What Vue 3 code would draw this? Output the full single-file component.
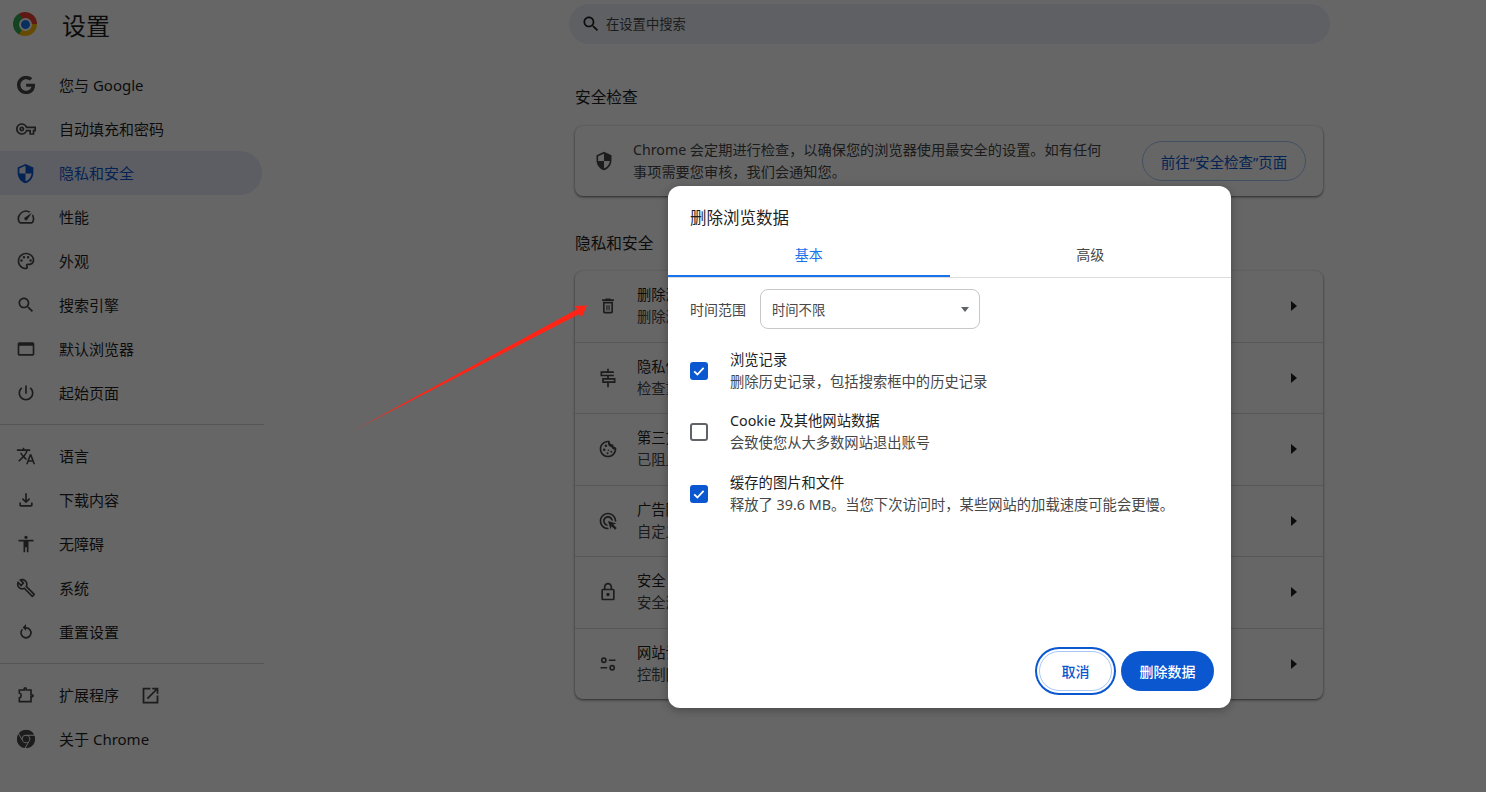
<script setup>
const icons = {
  google: 'M12.24 10.285V14.4h6.806c-.275 1.765-2.056 5.174-6.806 5.174-4.095 0-7.439-3.389-7.439-7.574s3.345-7.574 7.439-7.574c2.33 0 3.891.989 4.785 1.849l3.254-3.138C18.189 1.186 15.479 0 12.24 0c-6.635 0-12 5.365-12 12s5.365 12 12 12c6.926 0 11.52-4.869 11.52-11.726 0-.788-.085-1.39-.189-1.989H12.24z',
  key: 'M22 19h-6v-4h-2.68c-1.14 2.42-3.6 4-6.32 4-3.86 0-7-3.14-7-7s3.14-7 7-7c2.72 0 5.17 1.58 6.32 4H24v6h-2v4zm-4-2h2v-4h2v-2H11.94l-.23-.67C11.01 8.34 9.11 7 7 7c-2.76 0-5 2.24-5 5s2.24 5 5 5c2.11 0 4.01-1.34 4.71-3.33l.23-.67H18v4zM7 15c-1.65 0-3-1.35-3-3s1.35-3 3-3 3 1.35 3 3-1.35 3-3 3zm0-4c-.55 0-1 .45-1 1s.45 1 1 1 1-.45 1-1-.45-1-1-1z',
  shield: 'M12 1L3 5v6c0 5.55 3.84 10.74 9 12 5.16-1.26 9-6.45 9-12V5l-9-4zm0 10.99h7c-.53 4.12-3.28 7.79-7 8.94V12H5V6.3l7-3.11v8.8z',
  speed: 'M20.38 8.57l-1.23 1.85a8 8 0 0 1-.22 7.58H5.07A8 8 0 0 1 15.58 6.85l1.85-1.23A10 10 0 0 0 3.35 19a2 2 0 0 0 1.72 1h13.85a2 2 0 0 0 1.74-1 10 10 0 0 0-.27-10.44zm-9.79 6.84a2 2 0 0 0 2.83 0l5.66-8.49-8.49 5.66a2 2 0 0 0 0 2.83z',
  palette: 'M12 22C6.49 22 2 17.51 2 12S6.49 2 12 2s10 4.04 10 9c0 3.31-2.69 6-6 6h-1.77c-.28 0-.5.22-.5.5 0 .12.05.23.13.33.41.47.64 1.06.64 1.67 0 1.38-1.12 2.5-2.5 2.5zm0-18c-4.41 0-8 3.59-8 8s3.59 8 8 8c.28 0 .5-.22.5-.5 0-.16-.08-.28-.14-.35-.41-.46-.63-1.05-.63-1.65 0-1.38 1.12-2.5 2.5-2.5H16c2.21 0 4-1.79 4-4 0-3.86-3.59-7-8-7zM6.5 10a1.5 1.5 0 1 0 0 3 1.5 1.5 0 0 0 0-3zm3-4a1.5 1.5 0 1 0 0 3 1.5 1.5 0 0 0 0-3zm5 0a1.5 1.5 0 1 0 0 3 1.5 1.5 0 0 0 0-3zm3 4a1.5 1.5 0 1 0 0 3 1.5 1.5 0 0 0 0-3z',
  search: 'M15.5 14h-.79l-.28-.27C15.41 12.59 16 11.11 16 9.5 16 5.91 13.09 3 9.5 3S3 5.91 3 9.5 5.91 16 9.5 16c1.61 0 3.09-.59 4.23-1.57l.27.28v.79l5 4.99L20.49 19l-4.99-5zm-6 0C7.01 14 5 11.99 5 9.5S7.01 5 9.5 5 14 7.01 14 9.5 11.99 14 9.5 14z',
  browser: 'M20 4H4c-1.1 0-2 .9-2 2v12c0 1.1.9 2 2 2h16c1.1 0 2-.9 2-2V6c0-1.1-.9-2-2-2zm0 14H4V8h16v10z',
  power: 'M13 3h-2v10h2V3zm4.83 2.17l-1.42 1.42C17.99 7.86 19 9.81 19 12c0 3.87-3.13 7-7 7s-7-3.13-7-7c0-2.19 1.01-4.14 2.58-5.42L6.17 5.17C4.23 6.82 3 9.26 3 12c0 4.97 4.03 9 9 9s9-4.03 9-9c0-2.74-1.23-5.18-3.17-6.83z',
  translate: 'M12.87 15.07l-2.54-2.51.03-.03c1.74-1.94 2.98-4.17 3.71-6.53H17V4h-7V2H8v2H1v1.99h11.17C11.5 7.92 10.44 9.75 9 11.35 8.07 10.32 7.3 9.19 6.69 8h-2c.73 1.63 1.73 3.17 2.98 4.56l-5.09 5.02L4 19l5-5 3.11 3.11.76-2.04zM18.5 10h-2L12 22h2l1.12-3h4.75L21 22h2l-4.5-12zm-2.62 7l1.62-4.33L19.12 17h-3.24z',
  download: 'M18 15v3H6v-3H4v3c0 1.1.9 2 2 2h12c1.1 0 2-.9 2-2v-3h-2zm-1-4l-1.41-1.41L13 12.17V4h-2v8.17L8.41 9.59 7 11l5 5 5-5z',
  person: 'M12 2c1.1 0 2 .9 2 2s-.9 2-2 2-2-.9-2-2 .9-2 2-2zm9 7h-6v13h-2v-6h-2v6H9V9H3V7h18v2z',
  wrench: 'M22.61 18.99l-9.08-9.08c.93-2.34.45-5.1-1.44-7C9.79.61 6.21.4 3.66 2.26L7.5 6.11 6.08 7.52 2.25 3.69C.39 6.23.6 9.82 2.9 12.11c1.86 1.86 4.57 2.35 6.89 1.48l9.11 9.11c.39.39 1.02.39 1.41 0l2.3-2.3c.4-.38.4-1.01 0-1.41zm-3 1.6l-9.46-9.46c-.61.45-1.29.72-2 .82-1.36.2-2.79-.21-3.83-1.25C3.37 9.76 2.93 8.5 3 7.26l3.09 3.09 4.24-4.24-3.09-3.09c1.24-.07 2.49.37 3.44 1.31 1.08 1.08 1.49 2.57 1.24 3.96-.12.71-.42 1.37-.88 1.96l9.45 9.45-.88.89z',
  reset: 'M12 6V2.5L8 6.5l4 4V8c2.76 0 5 2.24 5 5s-2.24 5-5 5-5-2.24-5-5c0-1.4.6-2.7 1.5-3.6L7.1 8A7 7 0 1 0 12 6z',
  puzzle: 'M11 3.5c.7 0 1.2.5 1.2 1.2V6H18v5.8h1.3a1.2 1.2 0 0 1 0 2.4H18V20H4v-4.6c1.3-.3 2.2-1.5 2.2-2.9S5.3 9.9 4 9.6V6h5.8V4.7c0-.7.5-1.2 1.2-1.2z',
  chrome: 'M12 0C8.21 0 4.831 1.757 2.632 4.501l3.953 6.848A5.454 5.454 0 0 1 12 6.545h10.691A12 12 0 0 0 12 0zM1.931 5.47A11.943 11.943 0 0 0 0 12c0 6.012 4.42 10.991 10.189 11.864l3.953-6.847a5.45 5.45 0 0 1-6.865-2.29zm13.342 2.166a5.446 5.446 0 0 1 1.45 7.09l.002.001h-.002l-5.344 9.257c.206.01.413.016.621.016 6.627 0 12-5.373 12-12 0-1.54-.29-3.011-.818-4.364zM12 16.364a4.364 4.364 0 1 1 0-8.728 4.364 4.364 0 0 1 0 8.728Z',
  external: 'M19 19H5V5h7V3H3v18h18v-9h-2v7zM14 3v2h3.59l-9.83 9.83 1.41 1.41L19 6.41V10h2V3h-7z',
  trash: 'M6 19c0 1.1.9 2 2 2h8c1.1 0 2-.9 2-2V7H6v12zM8 9h8v10H8V9zm7.5-5l-1-1h-5l-1 1H5v2h14V4h-3.5zM10 11h1.4v6H10zm2.6 0H14v6h-1.4z',
  guide: 'M11 1h2v3h6v6h-6v2h8v6h-8v5h-2v-5H5v-6h6v-2H3V4h8V1zM5 6v2h14V6H5zm2 8v2h12v-2H7z',
  cookie: 'M12 22C6.49 22 2 17.51 2 12 2 6.2 6.9 1.5 13 2.1c.1 0 .9.1 1.1.2-.5 2.6 1.6 4.8 4.1 4.1-.3 2.2 1.3 3.9 3.6 3.7.1.6.2 1.3.2 1.9 0 5.51-4.49 10-10 10zm0-18c-4.41 0-8 3.59-8 8s3.59 8 8 8c4.1 0 7.5-3.1 7.9-7.1-1.9-.3-3.3-1.5-3.8-3.3-2.2-.1-3.9-1.7-4.1-3.9v-.1zM9.5 6.5a1.5 1.5 0 1 1 0 3 1.5 1.5 0 0 1 0-3zm-2 5a1.5 1.5 0 1 1 0 3 1.5 1.5 0 0 1 0-3zm5 1a1 1 0 1 1 0 2 1 1 0 0 1 0-2zm-1 3.5a1.2 1.2 0 1 1 0 2.4 1.2 1.2 0 0 1 0-2.4zm4.5-2a1.2 1.2 0 1 1 0 2.4 1.2 1.2 0 0 1 0-2.4z',
  ads: 'M11.71 17.99A5.993 5.993 0 0 1 6 12c0-3.31 2.69-6 6-6 3.22 0 5.84 2.53 5.99 5.71l-2.1-.63A3.999 3.999 0 0 0 12 8c-2.21 0-4 1.79-4 4 0 1.89 1.31 3.47 3.08 3.89l.63 2.1zM22 12c0 .3-.01.6-.04.9l-1.97-.59c.01-.1.01-.21.01-.31 0-4.42-3.58-8-8-8s-8 3.58-8 8 3.58 8 8 8c.1 0 .21 0 .31-.01l.59 1.97c-.3.03-.6.04-.9.04-5.52 0-10-4.48-10-10S6.48 2 12 2s10 4.48 10 10zm-3.77 4.26L22 15l-10-3 3 10 1.26-3.77 4.27 4.27 1.98-1.98-4.28-4.26z',
  lock: 'M18 8h-1V6c0-2.76-2.24-5-5-5S7 3.24 7 6v2H6c-1.1 0-2 .9-2 2v10c0 1.1.9 2 2 2h12c1.1 0 2-.9 2-2V10c0-1.1-.9-2-2-2zM9 6c0-1.66 1.34-3 3-3s3 1.34 3 3v2H9V6zm9 14H6V10h12v10zm-6-3c1.1 0 2-.9 2-2s-.9-2-2-2-2 .9-2 2 .9 2 2 2z',
  tune: 'M7 4a3.5 3.5 0 1 1 0 7 3.5 3.5 0 0 1 0-7zm0 2a1.5 1.5 0 1 0 0 3 1.5 1.5 0 0 0 0-3zm6 .5h8v2h-8zM17 13a3.5 3.5 0 1 1 0 7 3.5 3.5 0 0 1 0-7zm0 2a1.5 1.5 0 1 0 0 3 1.5 1.5 0 0 0 0-3zM3 15.5h8v2H3z'
}

const navGroups = [
  [
    { icon: 'google', label: '您与 Google' },
    { icon: 'key', label: '自动填充和密码' },
    { icon: 'shield', label: '隐私和安全', active: true },
    { icon: 'speed', label: '性能' },
    { icon: 'palette', label: '外观' },
    { icon: 'search', label: '搜索引擎' },
    { icon: 'browser', label: '默认浏览器' },
    { icon: 'power', label: '起始页面' }
  ],
  [
    { icon: 'translate', label: '语言' },
    { icon: 'download', label: '下载内容' },
    { icon: 'person', label: '无障碍' },
    { icon: 'wrench', label: '系统' },
    { icon: 'reset', label: '重置设置' }
  ],
  [
    { icon: 'puzzle', label: '扩展程序', external: true },
    { icon: 'chrome', label: '关于 Chrome' }
  ]
]

const rows = [
  { icon: 'trash', title: '删除浏览数据', sub: '删除浏览记录、Cookie、缓存及其他数据' },
  { icon: 'guide', title: '隐私保护指南', sub: '检查重要的隐私和安全控制设置' },
  { icon: 'cookie', title: '第三方 Cookie', sub: '已阻止无痕模式下的第三方 Cookie' },
  { icon: 'ads', title: '广告隐私设置', sub: '自定义用于广告的信息' },
  { icon: 'lock', title: '安全', sub: '安全浏览（防范危险网站）和其他安全设置' },
  { icon: 'tune', title: '网站设置', sub: '控制网站可以使用和显示什么信息' }
]

const options = [
  { title: '浏览记录', sub: '删除历史记录，包括搜索框中的历史记录', checked: true },
  { title: 'Cookie 及其他网站数据', sub: '会致使您从大多数网站退出账号', checked: false },
  { title: '缓存的图片和文件', sub: '释放了 39.6 MB。当您下次访问时，某些网站的加载速度可能会更慢。', checked: true }
]
</script>

<template>
  <div class="page">
    <header class="top">
      <div class="brand">
        <span class="logo"><span class="logo-core"></span></span>
        <span class="brand-title">设置</span>
      </div>
      <div class="search">
        <svg class="search-icon" viewBox="0 0 24 24"><path :d="icons.search" /></svg>
        <span class="search-text">在设置中搜索</span>
      </div>
    </header>

    <div class="body">
      <nav class="side">
        <div v-for="(group, g) in navGroups" :key="g" class="side-group">
          <div v-for="item in group" :key="item.label" class="side-item" :class="{ active: item.active }">
            <svg class="side-icon" :class="'ic-' + item.icon" viewBox="0 0 24 24"><path :d="icons[item.icon]" /></svg>
            <span class="side-label">{{ item.label }}</span>
            <svg v-if="item.external" class="ext-icon" viewBox="0 0 24 24"><path :d="icons.external" /></svg>
          </div>
        </div>
      </nav>

      <main class="main">
        <h2 class="section-title first">安全检查</h2>
        <section class="card safety">
          <svg class="row-icon" viewBox="0 0 24 24"><path :d="icons.shield" /></svg>
          <p class="safety-text">Chrome 会定期进行检查，以确保您的浏览器使用最安全的设置。如有任何事项需要您审核，我们会通知您。</p>
          <button class="safety-btn">前往“安全检查”页面</button>
        </section>

        <h2 class="section-title second">隐私和安全</h2>
        <section class="card list">
          <div v-for="row in rows" :key="row.title" class="row">
            <svg class="row-icon" viewBox="0 0 24 24"><path :d="icons[row.icon]" /></svg>
            <div class="row-text">
              <div class="row-title">{{ row.title }}</div>
              <div class="row-sub">{{ row.sub }}</div>
            </div>
            <span class="row-arrow"></span>
          </div>
        </section>
      </main>
    </div>

    <div class="scrim"></div>

    <!-- 标注箭头 -->
    <svg class="annotation" viewBox="0 0 1486 792">
      <defs>
        <linearGradient id="arrowFade" x1="350" y1="432" x2="400" y2="405" gradientUnits="userSpaceOnUse">
          <stop offset="0" stop-color="#ff2416" stop-opacity="0.6" />
          <stop offset="1" stop-color="#ff2416" />
        </linearGradient>
      </defs>
      <polygon fill="url(#arrowFade)" points="350,432.5 577.3,309 574.3,306 587,305.5 581.7,317.3 579.3,314" />
    </svg>

    <div class="dialog">
      <h3 class="dialog-title">删除浏览数据</h3>
      <div class="tabs">
        <div class="tab selected">基本</div>
        <div class="tab">高级</div>
      </div>

      <div class="range">
        <span class="range-label">时间范围</span>
        <div class="select">
          <span>时间不限</span>
          <span class="select-caret"></span>
        </div>
      </div>

      <div class="options">
        <div v-for="opt in options" :key="opt.title" class="option">
          <span class="check" :class="{ on: opt.checked }">
            <svg v-if="opt.checked" viewBox="0 0 18 18"><path d="M4.2 9.4l3.2 3.1 6.2-6.6" fill="none" stroke="#fff" stroke-width="1.8" /></svg>
          </span>
          <div>
            <div class="option-title">{{ opt.title }}</div>
            <div class="option-sub">{{ opt.sub }}</div>
          </div>
        </div>
      </div>

      <div class="footer">
        <button class="btn cancel">取消</button>
        <button class="btn confirm">删除数据</button>
      </div>
    </div>
  </div>
</template>

<style>
body {
  margin: 0;
  background: #fff;
}
</style>

<style scoped>
.page {
  position: relative;
  width: 1486px;
  height: 792px;
  overflow: hidden;
  background: #fff;
  color: #1f1f1f;
  font-family: "Noto Sans", "Noto Sans CJK SC", sans-serif;
}

.top {
  display: flex;
  height: 63px;
}

.brand {
  width: 569px;
  display: flex;
  align-items: center;
  box-sizing: border-box;
  height: 48px;
  padding-left: 13px;
  gap: 25px;
}

.logo {
  width: 24px;
  height: 24px;
  border-radius: 50%;
  background: conic-gradient(#ea4335 0deg 90deg, #fbbc04 90deg 210deg, #34a853 210deg 330deg, #ea4335 330deg);
  display: flex;
  align-items: center;
  justify-content: center;
}

.logo-core {
  width: 9px;
  height: 9px;
  border-radius: 50%;
  background: #1a73e8;
  border: 2px solid #fff;
}

.brand-title {
  font-size: 24px;
  line-height: 52px;
  margin-top: 4px;
}

.search {
  width: 761px;
  height: 40px;
  margin-top: 4px;
  border-radius: 20px;
  background: #edf0f7;
  display: flex;
  align-items: center;
  padding-left: 12px;
  box-sizing: border-box;
  gap: 5px;
  font-size: 13.3px;
  color: #474747;
}

.search-icon {
  width: 20px;
  height: 20px;
  fill: #1f1f1f;
}

.search-text {
  margin-top: -2px;
}

.body {
  display: flex;
}

.side {
  width: 264px;
  flex-shrink: 0;
}

.side-group + .side-group {
  margin-top: 9px;
  padding-top: 9px;
  border-top: 1px solid #d5d5d5;
}

.side-item {
  width: 262px;
  height: 44px;
  display: flex;
  align-items: center;
  box-sizing: border-box;
  padding-left: 16px;
  font-size: 15px;
  border-radius: 0 22px 22px 0;
}

.side-item.active {
  background: #e6ecf8;
  color: #0b57d0;
}

.side-label {
  margin-top: -1px;
}

.side-icon {
  width: 20px;
  height: 20px;
  margin-right: 23px;
  fill: #474747;
  flex-shrink: 0;
}

.ic-google,
.ic-chrome {
  transform: scale(0.92);
}

.ic-shield {
  width: 21px;
  height: 21px;
  margin-left: -1px;
  fill: #0b57d0;
}

.ic-puzzle {
  fill: none;
  stroke: #474747;
  stroke-width: 2;
}

.ext-icon {
  width: 21px;
  height: 21px;
  margin-left: 21px;
  fill: #474747;
}

.main {
  width: 748px;
  margin-left: 311px;
}

.section-title {
  margin: 0;
  font-size: 15.7px;
  font-weight: 400;
  line-height: 24px;
}

.section-title.first {
  margin-top: 22px;
  margin-bottom: 17px;
}

.section-title.second {
  margin-top: 35px;
  margin-bottom: 16px;
}

.card {
  background: #fff;
  border-radius: 8px;
  box-shadow: 0 1px 3px rgba(0, 0, 0, 0.45), 0 1px 2px rgba(0, 0, 0, 0.2);
}

.safety {
  height: 70px;
  display: flex;
  align-items: center;
  box-sizing: border-box;
  padding: 0 17px 0 19px;
}

.row-icon {
  width: 20px;
  height: 20px;
  fill: #474747;
  flex-shrink: 0;
}

.safety-text {
  margin: 0 0 0 19px;
  width: 482px;
  font-size: 14.2px;
  line-height: 22px;
  color: #474747;
}

.safety-btn {
  margin-left: auto;
  width: 164px;
  height: 40px;
  border: 1px solid #a8c7fa;
  border-radius: 20px;
  background: #fff;
  color: #0b57d0;
  font-family: inherit;
  font-size: 14.5px;
  padding: 0;
}

.list {
  height: 428px;
  display: flex;
  flex-direction: column;
}

.row {
  flex: 1;
  display: flex;
  align-items: center;
  box-sizing: border-box;
  padding: 0 26px 0 23px;
}

.row + .row {
  border-top: 1px solid #d9d9d9;
}

.row-text {
  margin-left: 19px;
  white-space: nowrap;
}

.row-title {
  font-size: 14.3px;
  line-height: 22px;
}

.row-sub {
  font-size: 14.3px;
  line-height: 22px;
  color: #474747;
}

.row-arrow {
  margin-left: auto;
  width: 0;
  height: 0;
  border-left: 6px solid #1f1f1f;
  border-top: 5px solid transparent;
  border-bottom: 5px solid transparent;
}

.scrim {
  position: absolute;
  inset: 0;
  background: rgba(0, 0, 0, 0.6);
}

.annotation {
  position: absolute;
  left: 0;
  top: 0;
  width: 1486px;
  height: 792px;
  pointer-events: none;
}

.dialog {
  position: absolute;
  left: 668px;
  top: 186px;
  width: 563px;
  height: 522px;
  background: #fff;
  border-radius: 12px;
  display: flex;
  flex-direction: column;
  box-shadow: 0 2px 10px rgba(0, 0, 0, 0.3);
}

.dialog-title {
  margin: 0;
  padding: 20px 22px 0;
  font-size: 16.5px;
  font-weight: 400;
  line-height: 24px;
}

.tabs {
  display: flex;
  height: 48px;
  box-sizing: border-box;
  border-bottom: 1px solid #dcdcdc;
}

.tab {
  flex: 1;
  text-align: center;
  font-size: 14px;
  line-height: 22px;
  padding-top: 14px;
  color: #474747;
}

.tab.selected {
  color: #1a73e8;
  height: 47px;
  box-sizing: border-box;
  border-bottom: 2px solid #1a73e8;
}

.range {
  display: flex;
  align-items: center;
  margin: 11px 0 0 22px;
}

.range-label {
  font-size: 14px;
  color: #474747;
  width: 70px;
}

.select {
  width: 220px;
  height: 40px;
  box-sizing: border-box;
  border: 1px solid #c7c7c7;
  border-radius: 8px;
  display: flex;
  align-items: center;
  justify-content: space-between;
  padding: 0 10px 0 11px;
  font-size: 13.3px;
  color: #474747;
}

.select-caret {
  width: 0;
  height: 0;
  border-top: 5px solid #5f6368;
  border-left: 4.5px solid transparent;
  border-right: 4.5px solid transparent;
}

.options {
  margin: 20px 0 0 22px;
  display: flex;
  flex-direction: column;
  gap: 17px;
}

.option {
  display: flex;
  align-items: center;
  gap: 22px;
}

.option:last-child {
  margin-top: 1px;
}

.check {
  width: 18px;
  height: 18px;
  box-sizing: border-box;
  border: 2px solid #5f6368;
  border-radius: 3px;
  flex-shrink: 0;
}

.check.on {
  background: #0b57d0;
  border: none;
}

.check svg {
  display: block;
  width: 18px;
  height: 18px;
}

.option-title {
  font-size: 14.3px;
  line-height: 22px;
}

.option-sub {
  font-size: 14.3px;
  line-height: 22px;
  color: #474747;
}

.footer {
  margin-top: auto;
  display: flex;
  justify-content: flex-end;
  gap: 9px;
  padding: 0 17px 17px 0;
}

.btn {
  height: 40px;
  border-radius: 20px;
  font-family: inherit;
  font-size: 14px;
  font-weight: 500;
  padding: 0;
}

.cancel {
  width: 73px;
  background: #fff;
  color: #0b57d0;
  border: 1px solid #a8c7fa;
  box-shadow: 0 0 0 2px #fff, 0 0 0 4px #0b57d0;
}

.confirm {
  width: 93px;
  background: #0b57d0;
  color: #fff;
  border: none;
}
</style>
